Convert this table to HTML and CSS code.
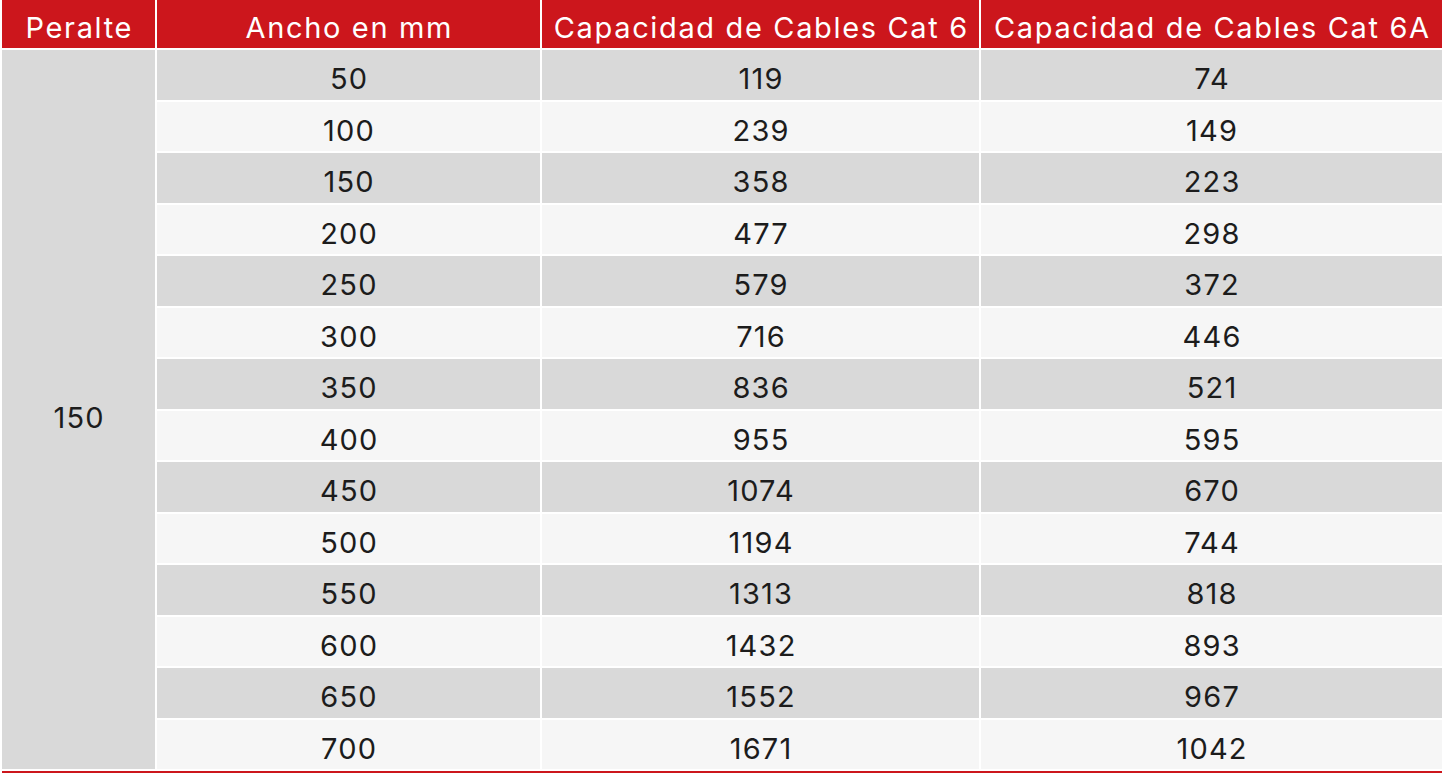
FILE: index.html
```html
<!DOCTYPE html>
<html lang="es">
<head>
<meta charset="utf-8">
<title>Capacidad de Cables</title>
<link rel="stylesheet" href="styles.css">
</head>
<body>
<div class="table">
  <div class="th">Peralte</div>
  <div class="th">Ancho en mm</div>
  <div class="th">Capacidad de Cables Cat 6</div>
  <div class="th">Capacidad de Cables Cat 6A</div>

  <div class="peralte">150</div>

  <div class="td odd">50</div><div class="td odd">119</div><div class="td odd">74</div>
  <div class="td even">100</div><div class="td even">239</div><div class="td even">149</div>
  <div class="td odd">150</div><div class="td odd">358</div><div class="td odd">223</div>
  <div class="td even">200</div><div class="td even">477</div><div class="td even">298</div>
  <div class="td odd">250</div><div class="td odd">579</div><div class="td odd">372</div>
  <div class="td even">300</div><div class="td even">716</div><div class="td even">446</div>
  <div class="td odd">350</div><div class="td odd">836</div><div class="td odd">521</div>
  <div class="td even">400</div><div class="td even">955</div><div class="td even">595</div>
  <div class="td odd">450</div><div class="td odd">1074</div><div class="td odd">670</div>
  <div class="td even">500</div><div class="td even">1194</div><div class="td even">744</div>
  <div class="td odd">550</div><div class="td odd">1313</div><div class="td odd">818</div>
  <div class="td even">600</div><div class="td even">1432</div><div class="td even">893</div>
  <div class="td odd">650</div><div class="td odd">1552</div><div class="td odd">967</div>
  <div class="td even">700</div><div class="td even">1671</div><div class="td even">1042</div>

  <div class="foot"></div>
</div>
</body>
</html>
```

FILE: styles.css
```css
html, body {
  margin: 0;
  padding: 0;
  background: #ffffff;
  overflow: hidden;
}

body {
  padding: 0 2px;
  font-family: Inter, "Liberation Sans", sans-serif;
  font-size: 29px;
  color: #1c1c1c;
}

.table {
  display: grid;
  grid-template-columns: 153px 383px 437px 461px;
  grid-template-rows: 48px repeat(14, 49.5px) 2px;
  column-gap: 2px;
  row-gap: 2px;
  width: 1440px;
}

.th,
.td,
.peralte {
  display: flex;
  align-items: center;
  justify-content: center;
  white-space: nowrap;
  line-height: 1;
}

.th {
  background: #cc161c;
  color: #ffffff;
  padding-top: 6px;
  letter-spacing: 1.65px;
  padding-left: 1.65px;
}

.td,
.peralte {
  letter-spacing: 1.2px;
  padding-left: 1.2px;
}

.td {
  padding-top: 8px;
}

.odd {
  background: #d9d9d9;
}

.even {
  background: #f6f6f6;
}

.peralte {
  grid-column: 1;
  grid-row: 2 / span 14;
  background: #d9d9d9;
  padding-top: 16px;
}

.foot {
  grid-column: 1 / -1;
  background: #cc161c;
}
```
